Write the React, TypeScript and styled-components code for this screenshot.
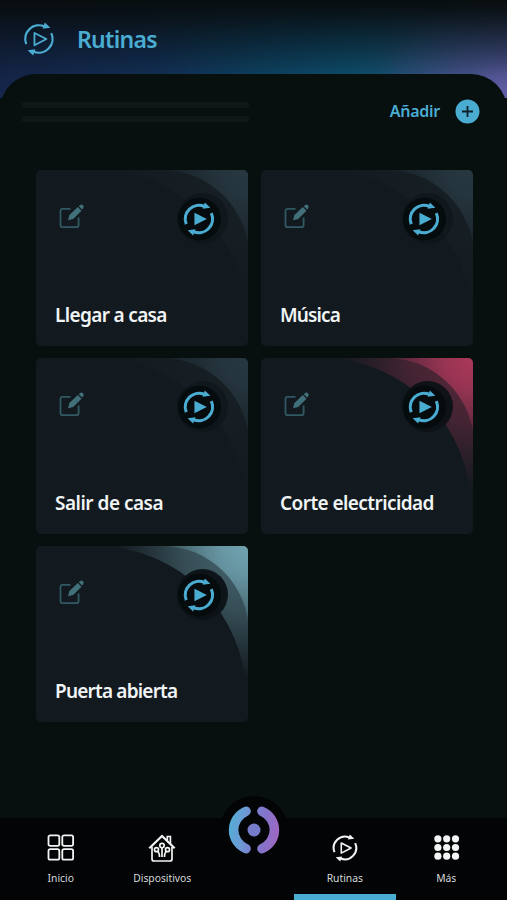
import React from 'react';
import styled, { createGlobalStyle } from 'styled-components';

const GlobalStyle = createGlobalStyle`
  * { box-sizing: border-box; }
  body { margin: 0; background: #070f0f; font-family: 'Noto Sans', sans-serif; }
  button { font: inherit; border: 0; padding: 0; background: none; color: inherit; }
`;

const BLUE = '#4bacd2';

const Screen = styled.div`
  width: 507px;
  height: 900px;
  display: flex;
  flex-direction: column;
  overflow: hidden;
  background: #070f0f;
`;

const Header = styled.header`
  flex: none;
  height: 98px;
  display: flex;
  align-items: flex-start;
  padding: 22px 22px 0;
  gap: 20px;
  background:
    linear-gradient(180deg, #080d0f 0%, rgba(8, 14, 17, 0.9) 14%, rgba(8, 18, 24, 0.55) 46%, rgba(8, 20, 28, 0.12) 78%, transparent 100%),
    radial-gradient(ellipse 130px 100px at 100% 90%, #6460aa 0%, rgba(92, 90, 160, 0.6) 35%, transparent 100%),
    linear-gradient(90deg, #16264d 0%, #13315a 30%, #0e4669 52%, #0e5473 70%, #285680 88%, #3c5688 100%);
`;

const Title = styled.h1`
  margin: 0;
  padding-left: 1px;
  font-size: 23px;
  line-height: 34px;
  font-weight: 600;
  letter-spacing: -0.7px;
  color: ${BLUE};
`;

const Panel = styled.main`
  flex: none;
  height: 744px;
  margin-top: -24px;
  padding: 0 27px 0 22px;
  border-radius: 36px 36px 0 0;
  background: #070f0f;
`;

const Toolbar = styled.div`
  display: flex;
  align-items: center;
  justify-content: space-between;
  height: 74px;
`;

const Skeleton = styled.div`
  display: grid;
  gap: 8px;
  width: 227px;
  padding-top: 2px;
`;

const SkeletonLine = styled.span`
  height: 6px;
  border-radius: 2px;
  background: #111719;
`;

const AddButton = styled.button`
  display: flex;
  align-items: center;
  gap: 15px;
  color: ${BLUE};
  font-size: 16px;
  font-weight: 600;
  letter-spacing: -0.25px;
`;

const Grid = styled.section`
  display: grid;
  grid-template-columns: 212.5px 212.5px;
  grid-auto-rows: 176px;
  gap: 12px 12.5px;
  padding: 21.5px 0 0 13.5px;
`;

const Card = styled.article`
  position: relative;
  display: flex;
  flex-direction: column;
  justify-content: space-between;
  padding: 32px 20px 18px 19.5px;
  border-radius: 5px;
  overflow: hidden;
  background: #131a1f;
`;

const Decoration = styled.svg`
  position: absolute;
  inset: 0;
`;

const CardActions = styled.div`
  position: relative;
  display: flex;
  justify-content: space-between;
  padding: 0 12px 0 3px;
`;

const CardTitle = styled.h2<{ $spacing: number }>`
  position: relative;
  margin: 0;
  font-size: 19px;
  line-height: 26px;
  font-weight: 600;
  white-space: nowrap;
  color: #f1f4f5;
  letter-spacing: ${(p) => p.$spacing}px;
`;

const NavBar = styled.nav`
  position: relative;
  flex: none;
  height: 82px;
  display: grid;
  grid-template-columns: 101.5px 101.5px 81px 101.5px 101.5px;
  padding-left: 10px;
  background: #020405;
`;

const NavItem = styled.button<{ $active?: boolean }>`
  display: flex;
  flex-direction: column;
  align-items: center;
  padding-top: 16px;
  gap: 8px;
  color: #f3f5f5;
  font-size: 10.3px;
  line-height: 16px;
  border-bottom: 6px solid ${(p) => (p.$active ? BLUE : 'transparent')};
`;

const NavLabel = styled.span`
  color: #d6d9da;
`;

const HomeButton = styled.button`
  display: flex;
  justify-content: center;
  align-items: center;
  justify-self: center;
  width: 68px;
  height: 68px;
  margin-top: -22px;
  border-radius: 50%;
  background: #020405;
`;

function RoutineIcon({ size, filled = false, weight = 2.6 }: { size: number; filled?: boolean; weight?: number }) {
  return (
    <svg width={size} height={size} viewBox="0 0 36 36" fill="none" stroke="currentColor" strokeWidth={weight}>
      <path d="M4.5 23.4A14.5 14.5 0 0 1 24 4.8" />
      <path d="M31 11.8A14.5 14.5 0 0 1 12 31.2" />
      <path d="M24.2 0.6L30 6L21.8 7.2Z" fill="currentColor" stroke="none" />
      <path d="M11.8 35.4L6 30L14.2 28.8Z" fill="currentColor" stroke="none" />
      {filled ? (
        <path d="M13.2 11.4L26.3 18L13.2 24.6Z" fill="currentColor" stroke="none" />
      ) : (
        <path d="M13.2 11.6L25.8 18L13.2 24.6Z" strokeWidth={weight * 0.8} strokeLinejoin="round" />
      )}
    </svg>
  );
}

function EditIcon() {
  return (
    <svg width="28" height="29" viewBox="0 -1 28 29" fill="none">
      <path d="M12.5 5.8H4.7Q2.5 5.8 2.5 8V22Q2.5 24.2 4.7 24.2H18.4Q20.6 24.2 20.6 22V14.5" stroke="#315963" strokeWidth="1.8" />
      <path d="M10 17.2L11.4 12L19.8 4L23.5 7.7L15.2 15.9Z" fill="#41707b" />
      <path d="M20.8 3.2L22.2 1.9Q23.6 0.8 25 2.2Q26.4 3.6 25.2 5.2L24.1 6.5Z" fill="#41707b" />
    </svg>
  );
}

function PlusIcon() {
  return (
    <svg width="25" height="25" viewBox="0 0 25 25">
      <circle cx="12.5" cy="12.5" r="12" fill={BLUE} />
      <path d="M12.5 7V18M7 12.5H18" stroke="#0b2028" strokeWidth="1.8" />
    </svg>
  );
}

const PlayButton = styled.button`
  display: flex;
  width: 34px;
  height: 34px;
  color: ${BLUE};
`;

const TONES = {
  slate: { color: '#2b3d47', outer: 0.85, inner: 0.15 },
  crimson: { color: '#aa385a', outer: 1, inner: 0.42 },
  teal: { color: '#70a3b0', outer: 1, inner: 0.5 },
};

type Tone = keyof typeof TONES;

function CardDecoration({ id, tone }: { id: string; tone: Tone }) {
  const { color, outer, inner } = TONES[tone];
  return (
    <Decoration width="213" height="176" viewBox="0 0 213 176">
      <defs>
        <radialGradient id={`${id}-band`} gradientUnits="userSpaceOnUse" cx="213" cy="0" r="132">
          <stop offset="0.2" stopColor={color} stopOpacity={inner} />
          <stop offset="0.5" stopColor={color} stopOpacity={inner * 0.75} />
          <stop offset="1" stopColor={color} stopOpacity="0" />
        </radialGradient>
        <radialGradient id={`${id}-corner`} gradientUnits="userSpaceOnUse" cx="213" cy="0" r="92">
          <stop offset="0" stopColor={color} stopOpacity={outer} />
          <stop offset="0.3" stopColor={color} stopOpacity={outer * 0.82} />
          <stop offset="1" stopColor={color} stopOpacity="0" />
        </radialGradient>
      </defs>
      <path d="M60 0A150 150 0 0 1 210 150H213V0H60Z" fill={`url(#${id}-band)`} />
      <path d="M126 0A87 87 0 0 1 213 87V0H126Z" fill={`url(#${id}-corner)`} />
      <circle cx="166.5" cy="48.5" r="25.5" fill="#0c1216" fillOpacity={tone === 'slate' ? 0.5 : 0.95} />
      <circle cx="163.5" cy="49" r="21.5" fill="#060b0e" />
    </Decoration>
  );
}

function HouseIcon() {
  return (
    <svg width="28" height="28" viewBox="0 0 28 28" fill="none" stroke="currentColor" strokeWidth="1.7">
      <path d="M1.3 14.3L14 2L26.7 14.3" strokeWidth="2.2" />
      <path d="M19.3 6.5V2.5H22.4V10M4 13V25Q4 27 6 27H22Q24 27 24 25V13" />
      <circle cx="14" cy="11.6" r="2.2" />
      <circle cx="8.5" cy="15.7" r="2" />
      <circle cx="19.5" cy="15.7" r="2" />
      <path d="M14 14V23M9.5 17.5Q11.5 18.5 11.5 23M18.5 17.5Q16.5 18.5 16.5 23" />
    </svg>
  );
}

function GridIcon() {
  return (
    <svg width="28" height="28" viewBox="0 0 28 28" fill="none" stroke="currentColor" strokeWidth="1.8">
      {[1.5, 15.3].map((x) =>
        [1.3, 15.1].map((y) => <rect key={`${x}-${y}`} x={x} y={y} width="10.8" height="10.6" rx="1.8" />),
      )}
    </svg>
  );
}

function DotsIcon() {
  return (
    <svg width="28" height="28" viewBox="0 0 28 28" fill="currentColor">
      {[5.9, 14.7, 23.5].map((x) => [4.8, 13.5, 22.2].map((y) => <circle key={`${x}-${y}`} cx={x} cy={y} r="3.6" />))}
    </svg>
  );
}

function Logo() {
  return (
    <svg width="54" height="54" viewBox="0 0 54 54" fill="none">
      <defs>
        <linearGradient id="logo" gradientUnits="userSpaceOnUse" x1="2" y1="23" x2="52" y2="31">
          <stop offset="0" stopColor="#55acd4" />
          <stop offset="0.27" stopColor="#6b9bd6" />
          <stop offset="0.5" stopColor="#7b7fd0" />
          <stop offset="0.68" stopColor="#8274c9" />
          <stop offset="1" stopColor="#a067c2" />
        </linearGradient>
      </defs>
      <path d="M19 8.3A20.3 20.3 0 0 0 19 45.7M35 8.3A20.3 20.3 0 0 1 35 45.7" stroke="url(#logo)" strokeWidth="9.6" strokeLinecap="round" />
      <circle cx="27" cy="27" r="6.5" fill="#767cca" />
    </svg>
  );
}

const ROUTINES: { name: string; tone: Tone; spacing: number }[] = [
  { name: 'Llegar a casa', tone: 'slate', spacing: -0.65 },
  { name: 'Música', tone: 'slate', spacing: -0.85 },
  { name: 'Salir de casa', tone: 'slate', spacing: -0.5 },
  { name: 'Corte electricidad', tone: 'crimson', spacing: -0.57 },
  { name: 'Puerta abierta', tone: 'teal', spacing: -0.8 },
];

const HeaderIcon = styled.span`
  display: flex;
  color: ${BLUE};
`;

export default function App() {
  return (
    <>
      <GlobalStyle />
      <Screen>
        <Header>
          <HeaderIcon>
            <RoutineIcon size={34} weight={2.4} />
          </HeaderIcon>
          <Title>Rutinas</Title>
        </Header>
        <Panel>
          <Toolbar>
            <Skeleton>
              <SkeletonLine />
              <SkeletonLine />
            </Skeleton>
            <AddButton>
              Añadir
              <PlusIcon />
            </AddButton>
          </Toolbar>
          <Grid>
            {ROUTINES.map((routine, index) => (
              <Card key={routine.name}>
                <CardDecoration id={`routine-${index}`} tone={routine.tone} />
                <CardActions>
                  <EditIcon />
                  <PlayButton aria-label={routine.name}>
                    <RoutineIcon size={34} filled weight={3.3} />
                  </PlayButton>
                </CardActions>
                <CardTitle $spacing={routine.spacing}>{routine.name}</CardTitle>
              </Card>
            ))}
          </Grid>
        </Panel>
        <NavBar>
          <NavItem>
            <GridIcon />
            <NavLabel>Inicio</NavLabel>
          </NavItem>
          <NavItem>
            <HouseIcon />
            <NavLabel>Dispositivos</NavLabel>
          </NavItem>
          <HomeButton>
            <Logo />
          </HomeButton>
          <NavItem $active>
            <RoutineIcon size={28} weight={2.6} />
            <NavLabel>Rutinas</NavLabel>
          </NavItem>
          <NavItem>
            <DotsIcon />
            <NavLabel>Más</NavLabel>
          </NavItem>
        </NavBar>
      </Screen>
    </>
  );
}
